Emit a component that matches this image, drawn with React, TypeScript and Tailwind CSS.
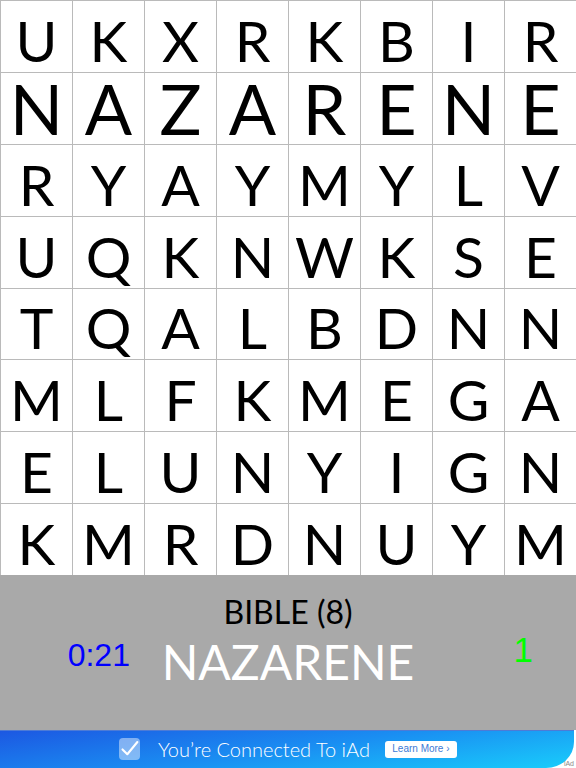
import React from 'react';

const rows: string[] = [
  'UKXRKBIR',
  'NAZARENE',
  'RYAYMYLV',
  'UQKNWKSE',
  'TQALBDNN',
  'MLFKMEGA',
  'ELUNYIGN',
  'KMRDNUYM',
];

// row that holds the found word is drawn larger
const foundRow = 1;

function Cell({ letter, found }: { letter: string; found: boolean }) {
  return (
    <div className="flex items-center justify-center border-l border-t border-[#bababa] bg-white">
      {found ? (
        <span className="text-[70px] leading-[68px] text-black">{letter}</span>
      ) : (
        <span className="pt-[8px] text-[57px] leading-[57px] text-black">{letter}</span>
      )}
    </div>
  );
}

function Board() {
  return (
    <div
      className="grid h-[575px] grid-cols-8 grid-rows-8 overflow-hidden"
      style={{ fontFamily: 'Lato, "Noto Sans", sans-serif' }}
    >
      {rows.map((row, r) =>
        row.split('').map((ch, c) => <Cell key={`${r}-${c}`} letter={ch} found={r === foundRow} />)
      )}
    </div>
  );
}

function StatusPanel() {
  return (
    <div className="grid h-[155px] grid-cols-[1fr_auto_1fr] bg-[#a9a9a9]">
      <div className="flex justify-center pl-[36px] pt-[64px]">
        <span className="font-['Liberation_Sans',Arial,sans-serif] text-[32px] leading-none text-[#0000ff]">0:21</span>
      </div>
      <div className="flex flex-col items-center pt-[21px] font-['Lato','Noto_Sans',sans-serif]">
        <span className="text-[32px] leading-none text-black">BIBLE (8)</span>
        <span className="mt-[10px] whitespace-nowrap text-[48px] leading-none text-white">NAZARENE</span>
      </div>
      <div className="flex justify-center pl-[56px] pt-[57px]">
        <span className="font-['Liberation_Sans',Arial,sans-serif] text-[35px] leading-none text-[#00ff00]">1</span>
      </div>
    </div>
  );
}

function AdBanner() {
  return (
    <div className="relative h-[38px] bg-white">
      <div className="mr-[2px] flex h-full items-center justify-center rounded-br-[28px_26px] border-t border-[#4d7bd6] bg-[linear-gradient(172deg,#1c58e2_0%,#1a8ef2_50%,#19cdfb_100%)] pb-[1px] pl-[2px]">
        <div className="flex h-[22px] w-[21px] items-center justify-center rounded-[4px] bg-[#ffffff]/45">
          <svg viewBox="0 0 24 24" className="h-[22px] w-[22px]" fill="none" stroke="white" strokeWidth="2.4" strokeLinecap="round" strokeLinejoin="round">
            <path d="M4 12.5l5.5 5.5L21 4" />
          </svg>
        </div>
        <span className="ml-[18px] font-['Lato','Noto_Sans',sans-serif] text-[20px] font-light leading-none text-white">
          You’re Connected To iAd
        </span>
        <div className="ml-[15px] flex h-[17px] w-[72px] items-center justify-center rounded-[3px] bg-white font-['Liberation_Sans',Arial,sans-serif] text-[10px] leading-none text-[#3d7ad6]">
          Learn More ›
        </div>
      </div>
      <span className="absolute bottom-[1px] right-[2px] font-['Liberation_Sans',Arial,sans-serif] text-[7px] leading-none text-[#8a8a8a]">
        iAd
      </span>
    </div>
  );
}

export default function App() {
  return (
    <div className="h-[768px] w-[576px] overflow-hidden bg-white">
      <Board />
      <StatusPanel />
      <AdBanner />
    </div>
  );
}
